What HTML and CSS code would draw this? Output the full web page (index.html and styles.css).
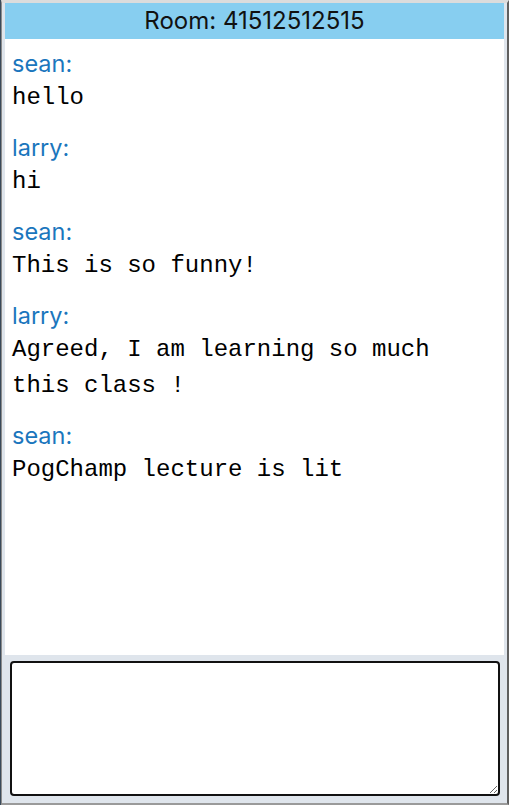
FILE: index.html
```html
<!DOCTYPE html>
<html>
<head>
<meta charset="utf-8">
<link rel="stylesheet" href="styles.css">
</head>
<body>
<div class="window">
  <div class="header">Room: 41512512515</div>
  <div class="messages">
    <div class="msg"><div class="name">sean:</div><div class="text">hello</div></div>
    <div class="msg"><div class="name">larry:</div><div class="text">hi</div></div>
    <div class="msg"><div class="name">sean:</div><div class="text">This is so funny!</div></div>
    <div class="msg"><div class="name">larry:</div><div class="text">Agreed, I am learning so much this class !</div></div>
    <div class="msg"><div class="name">sean:</div><div class="text">PogChamp lecture is lit</div></div>
  </div>
  <div class="composer"><textarea class="input" autofocus></textarea></div>
</div>
</body>
</html>
```
FILE: styles.css
```css
html, body { margin: 0; padding: 0; height: 100%; }
body { background: #3a4a5a; }
.window {
  box-sizing: border-box;
  height: 805px;
  margin-left: 1px;
  border-left: 1px solid #8c8c8c;
  border-right: 2px solid #5f5f5f;
  border-bottom: 2px solid #9a9a9a;
  border-top: 3px solid #dcdcdc;
  padding: 0 3px 0 3px;
  background: #dfe5ec;
  display: flex;
  flex-direction: column;
}
.header {
  background: #87cef0;
  height: 36px;
  line-height: 36px;
  text-align: center;
  font-family: Inter, "Noto Sans", sans-serif;
  font-size: 24px;
  color: #111;
}
.messages {
  flex: 1;
  background: #fff;
  padding: 9px 7px 0 7px;
  display: flex;
  flex-direction: column;
  gap: 16px;
}
.name {
  font-family: Inter, "Noto Sans", sans-serif;
  font-size: 23.5px;
  line-height: 32px;
  color: #1b76bd;
}
.text {
  font-family: "Liberation Mono", monospace;
  font-size: 24px;
  line-height: 36px;
  color: #000;
  max-width: 440px;
}
.composer {
  padding: 6px 4px 7px 5px;
  display: flex;
}
.input {
  box-sizing: border-box;
  width: 100%;
  height: 135px;
  border: 2px solid #111;
  border-radius: 4px;
  outline: none;
  padding: 18px 16px;
  font-family: "Liberation Mono", monospace;
  font-size: 24px;
  resize: vertical;
  background: #fff;
}
```
